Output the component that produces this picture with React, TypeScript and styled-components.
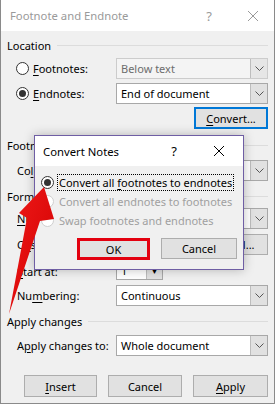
import styled, { createGlobalStyle } from "styled-components";

const GlobalStyle = createGlobalStyle`
  html, body {
    margin: 0;
    padding: 0;
    background: #ffffff;
  }
  * {
    box-sizing: border-box;
  }
`;

const Window = styled.div`
  position: relative;
  width: 275px;
  height: 404px;
  display: flex;
  flex-direction: column;
  border: 1px solid #8a8a8a;
  border-top: none;
  font-family: "Noto Sans", "Open Sans", sans-serif;
  font-size: 11px;
  color: #000;
  overflow: hidden;
`;

const TitleBar = styled.div<{ $active?: boolean; $h: number; $pl: number }>`
  height: ${(p) => p.$h}px;
  flex-shrink: 0;
  display: flex;
  align-items: center;
  padding-left: ${(p) => p.$pl}px;
  background: #fff;
  color: ${(p) => (p.$active ? "#000" : "#9a9a9a")};
  font-size: 11.3px;
`;

const TitleText = styled.span`
  flex: 1;
`;

const TitleHelp = styled.span<{ $mr: number }>`
  margin-right: ${(p) => p.$mr}px;
  font-size: 13px;
`;

const TitleClose = styled.svg<{ $mr: number }>`
  margin-right: ${(p) => p.$mr}px;
`;

const Body = styled.div`
  flex: 1;
  background: #f0f0f0;
  padding: 0 6px;
  display: flex;
  flex-direction: column;
`;

const GroupHeader = styled.div<{ $mt: number }>`
  margin-top: ${(p) => p.$mt}px;
  height: 14px;
  display: flex;
  align-items: center;
  white-space: nowrap;
`;

const GroupLine = styled.div`
  flex: 1;
  height: 1px;
  margin-left: 6px;
  background: #dcdcdc;
`;

const Row = styled.div<{ $mt: number; $h?: number; $indent?: number }>`
  margin-top: ${(p) => p.$mt}px;
  height: ${(p) => p.$h ?? 21}px;
  display: flex;
  align-items: center;
  padding-left: ${(p) => p.$indent ?? 10}px;
`;

const Label = styled.span`
  flex: 1;
  white-space: nowrap;
`;

const U = styled.span`
  text-decoration: underline;
  text-underline-offset: 2px;
`;

const RadioLabel = styled.label<{ $disabled?: boolean }>`
  display: flex;
  align-items: center;
  flex: 1;
  white-space: nowrap;
  color: ${(p) => (p.$disabled ? "#a0a0a0" : "#000")};
`;

const RadioCircle = styled.span<{ $checked?: boolean; $disabled?: boolean }>`
  width: 13px;
  height: 13px;
  border-radius: 50%;
  border: 1px solid ${(p) => (p.$disabled ? "#cfcfcf" : "#333")};
  background: #fff;
  display: flex;
  align-items: center;
  justify-content: center;
  margin-right: 4px;
  flex-shrink: 0;
  &::after {
    content: "";
    width: 7px;
    height: 7px;
    border-radius: 50%;
    background: ${(p) => (p.$checked ? "#333" : "transparent")};
  }
`;

const FocusText = styled.span<{ $focus?: boolean }>`
  padding: 0 1px;
  outline: ${(p) => (p.$focus ? "1px dotted #000" : "none")};
  line-height: 15px;
`;

const Select = styled.div<{ $disabled?: boolean }>`
  width: 152px;
  height: 21px;
  display: flex;
  border: 1px solid ${(p) => (p.$disabled ? "#cccccc" : "#a8a8a8")};
  background: ${(p) => (p.$disabled ? "#f4f4f4" : "#fff")};
  color: ${(p) => (p.$disabled ? "#6d6d6d" : "#000")};
`;

const SelectValue = styled.span`
  flex: 1;
  padding-left: 4px;
  line-height: 19px;
  white-space: nowrap;
  overflow: hidden;
`;

const ArrowBox = styled.span<{ $disabled?: boolean }>`
  width: 17px;
  display: flex;
  align-items: center;
  justify-content: center;
  background: ${(p) => (p.$disabled ? "#e6e6e6" : "#e1e1e1")};
  border-left: 1px solid #bdbdbd;
`;

const SpinBox = styled.div`
  width: 47px;
  height: 18px;
  display: flex;
  border: 1px solid #a8a8a8;
  background: #fff;
  margin-right: 105px;
`;

const SpinValue = styled.span`
  flex: 1;
  padding-left: 4px;
  line-height: 16px;
`;

const SpinButton = styled.span`
  width: 16px;
  display: flex;
  align-items: center;
  justify-content: center;
  background: #e1e1e1;
  border-left: 1px solid #bdbdbd;
  font-size: 7px;
`;

const TextInput = styled.div`
  width: 70px;
  height: 21px;
  border: 1px solid #a8a8a8;
  background: #fff;
  margin-right: 8px;
`;

const ButtonRow = styled.div<{ $mt: number; $gap: number }>`
  margin-top: ${(p) => p.$mt}px;
  display: flex;
  justify-content: flex-end;
  gap: ${(p) => p.$gap}px;
`;

const Button = styled.button<{ $w: number; $h?: number; $focus?: boolean; $mark?: boolean }>`
  width: ${(p) => p.$w}px;
  height: ${(p) => p.$h ?? 22}px;
  padding: 0;
  font-family: inherit;
  font-size: 11px;
  color: #000;
  background: #e1e1e1;
  border: ${(p) =>
    p.$mark ? "3px solid #e3000f" : p.$focus ? "2px solid #0078d7" : "1px solid #adadad"};
`;

const Dialog = styled.div`
  position: absolute;
  left: 33px;
  top: 135px;
  width: 210px;
  height: 135px;
  border: 1px solid #6f5ea4;
  display: flex;
  flex-direction: column;
  box-shadow: 0 0 10px rgba(0, 0, 0, 0.25);
`;

const DialogBody = styled.div`
  flex: 1;
  background: #f0f0f0;
  padding: 8px 6px 0 6px;
  display: flex;
  flex-direction: column;
  gap: 3px;
`;

const DialogRow = styled.div`
  height: 16px;
  display: flex;
  align-items: center;
`;

const Arrow = styled.svg`
  position: absolute;
  left: 0;
  top: 0;
  pointer-events: none;
`;

const Chevron = () => (
  <svg width="9" height="6" viewBox="0 0 9 6">
    <polyline points="0.5,0.5 4.5,4.5 8.5,0.5" fill="none" stroke="#555" strokeWidth="1" />
  </svg>
);

const CloseIcon = ({ color, mr }: { color: string; mr: number }) => (
  <TitleClose $mr={mr} width="10" height="10" viewBox="0 0 10 10">
    <path d="M0 0 L10 10 M10 0 L0 10" stroke={color} strokeWidth="1" />
  </TitleClose>
);

const Combo = ({ value, disabled }: { value: string; disabled?: boolean }) => (
  <Select $disabled={disabled}>
    <SelectValue>{value}</SelectValue>
    <ArrowBox $disabled={disabled}>
      <Chevron />
    </ArrowBox>
  </Select>
);

export default function App() {
  return (
    <>
      <GlobalStyle />
      <Window>
        <TitleBar $h={31} $pl={9}>
          <TitleText>Footnote and Endnote</TitleText>
          <TitleHelp $mr={36}>?</TitleHelp>
          <CloseIcon color="#9a9a9a" mr={16} />
        </TitleBar>
        <Body>
          <GroupHeader $mt={7}>
            Location
            <GroupLine />
          </GroupHeader>
          <Row $mt={6} $indent={9}>
            <RadioLabel>
              <RadioCircle />
              <span>
                <U>F</U>ootnotes:
              </span>
            </RadioLabel>
            <Combo value="Below text" disabled />
          </Row>
          <Row $mt={4} $indent={9}>
            <RadioLabel>
              <RadioCircle $checked />
              <span>
                <U>E</U>ndnotes:
              </span>
            </RadioLabel>
            <Combo value="End of document" />
          </Row>
          <ButtonRow $mt={3} $gap={0}>
            <Button $w={74} $focus>
              <U>C</U>onvert...
            </Button>
          </ButtonRow>

          <GroupHeader $mt={9}>
            Footnote layout
            <GroupLine />
          </GroupHeader>
          <Row $mt={8}>
            <Label>
              Co<U>l</U>umns:
            </Label>
            <Combo value="Match section layout" />
          </Row>

          <GroupHeader $mt={8}>
            Format
            <GroupLine />
          </GroupHeader>
          <Row $mt={5}>
            <Label>
              <U>N</U>umber format:
            </Label>
            <Combo value="1, 2, 3, ..." />
          </Row>
          <Row $mt={5}>
            <Label>
              C<U>u</U>stom mark:
            </Label>
            <TextInput />
            <Button $w={74} $h={21}>
              Sy<U>m</U>bol...
            </Button>
          </Row>
          <Row $mt={7} $h={18}>
            <Label>
              <U>S</U>tart at:
            </Label>
            <SpinBox>
              <SpinValue>1</SpinValue>
              <SpinButton>▼</SpinButton>
            </SpinBox>
          </Row>
          <Row $mt={5}>
            <Label>
              Nu<U>m</U>bering:
            </Label>
            <Combo value="Continuous" />
          </Row>

          <GroupHeader $mt={8}>
            Apply changes
            <GroupLine />
          </GroupHeader>
          <Row $mt={7}>
            <Label>
              A<U>p</U>ply changes to:
            </Label>
            <Combo value="Whole document" />
          </Row>

          <ButtonRow $mt={19} $gap={11}>
            <Button $w={73}>
              <U>I</U>nsert
            </Button>
            <Button $w={74}>Cancel</Button>
            <Button $w={75}>
              <U>A</U>pply
            </Button>
          </ButtonRow>
        </Body>

        <Dialog>
          <TitleBar $active $h={30} $pl={8}>
            <TitleText>Convert Notes</TitleText>
            <TitleHelp $mr={37}>?</TitleHelp>
            <CloseIcon color="#000" mr={19} />
          </TitleBar>
          <DialogBody>
            <DialogRow>
              <RadioLabel>
                <RadioCircle $checked />
                <FocusText $focus>
                  Convert all <U>f</U>ootnotes to endnotes
                </FocusText>
              </RadioLabel>
            </DialogRow>
            <DialogRow>
              <RadioLabel $disabled>
                <RadioCircle $disabled />
                <FocusText>Convert all endnotes to footnotes</FocusText>
              </RadioLabel>
            </DialogRow>
            <DialogRow>
              <RadioLabel $disabled>
                <RadioCircle $disabled />
                <FocusText>Swap footnotes and endnotes</FocusText>
              </RadioLabel>
            </DialogRow>
            <ButtonRow $mt={7} $gap={11}>
              <Button $w={73} $mark>
                OK
              </Button>
              <Button $w={76} $h={21}>
                Cancel
              </Button>
            </ButtonRow>
          </DialogBody>
        </Dialog>

        <Arrow width="275" height="404" viewBox="0 0 275 404">
          <defs>
            <linearGradient id="arrowFill" x1="0" y1="0" x2="1" y2="1">
              <stop offset="0" stopColor="#f01a1a" />
              <stop offset="1" stopColor="#d00000" />
            </linearGradient>
          </defs>
          <polygon
            points="43,187 53,219 39,221 8,314 26,218 18,213"
            fill="url(#arrowFill)"
          />
        </Arrow>
      </Window>
    </>
  );
}
